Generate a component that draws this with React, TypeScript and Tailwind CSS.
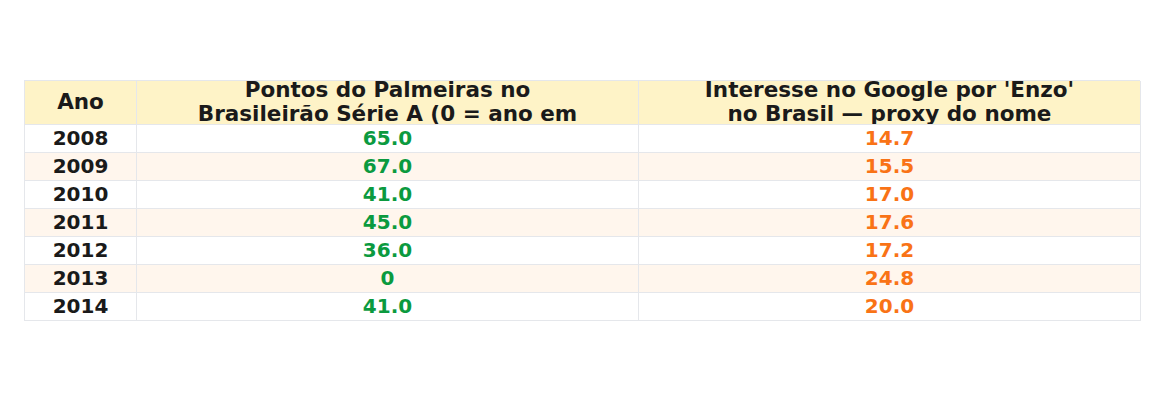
const rows = [
  { year: "2008", pts: "65.0", enzo: "14.7" },
  { year: "2009", pts: "67.0", enzo: "15.5" },
  { year: "2010", pts: "41.0", enzo: "17.0" },
  { year: "2011", pts: "45.0", enzo: "17.6" },
  { year: "2012", pts: "36.0", enzo: "17.2" },
  { year: "2013", pts: "0", enzo: "24.8" },
  { year: "2014", pts: "41.0", enzo: "20.0" },
];

export default function App() {
  return (
    <div
      className="w-[1164px] h-[400px] bg-white pt-[80px] pl-[24px]"
      style={{ fontFamily: '"DejaVu Sans", sans-serif' }}
    >
      <div className="grid grid-cols-[112px_502px_502px] w-[1116px] border-t border-l border-[#e5e7eb] font-bold text-[20px] text-[#1a1a1a]">
        <div className="h-[44px] bg-[#fef3c7] border-r border-b border-[#e5e7eb] flex items-center justify-center text-[21.5px]">
          Ano
        </div>
        <div className="h-[44px] bg-[#fef3c7] border-r border-b border-[#e5e7eb] overflow-hidden text-center text-[21.5px] leading-[23.5px]">
          <div className="-mt-[3px]">
            Pontos do Palmeiras no
            <br />
            Brasileirão Série A (0 = ano em
            <br />
            que não disputou)
          </div>
        </div>
        <div className="h-[44px] bg-[#fef3c7] border-r border-b border-[#e5e7eb] overflow-hidden text-center text-[21.5px] leading-[23.5px]">
          <div className="-mt-[3px]">
            Interesse no Google por 'Enzo'
            <br />
            no Brasil — proxy do nome
            <br />
            (índice)
          </div>
        </div>
        {rows.map((r, i) => {
          const bg = i % 2 === 1 ? "bg-[#fff6ed]" : "bg-white";
          return [
            <div
              key={r.year + "a"}
              className={`h-[28px] pb-[2px] ${bg} border-r border-b border-[#e5e7eb] flex items-center justify-center`}
            >
              {r.year}
            </div>,
            <div
              key={r.year + "b"}
              className={`h-[28px] pb-[2px] ${bg} border-r border-b border-[#e5e7eb] flex items-center justify-center text-[#0b9a3f]`}
            >
              {r.pts}
            </div>,
            <div
              key={r.year + "c"}
              className={`h-[28px] pb-[2px] ${bg} border-r border-b border-[#e5e7eb] flex items-center justify-center text-[#f97316]`}
            >
              {r.enzo}
            </div>,
          ];
        })}
      </div>
    </div>
  );
}
